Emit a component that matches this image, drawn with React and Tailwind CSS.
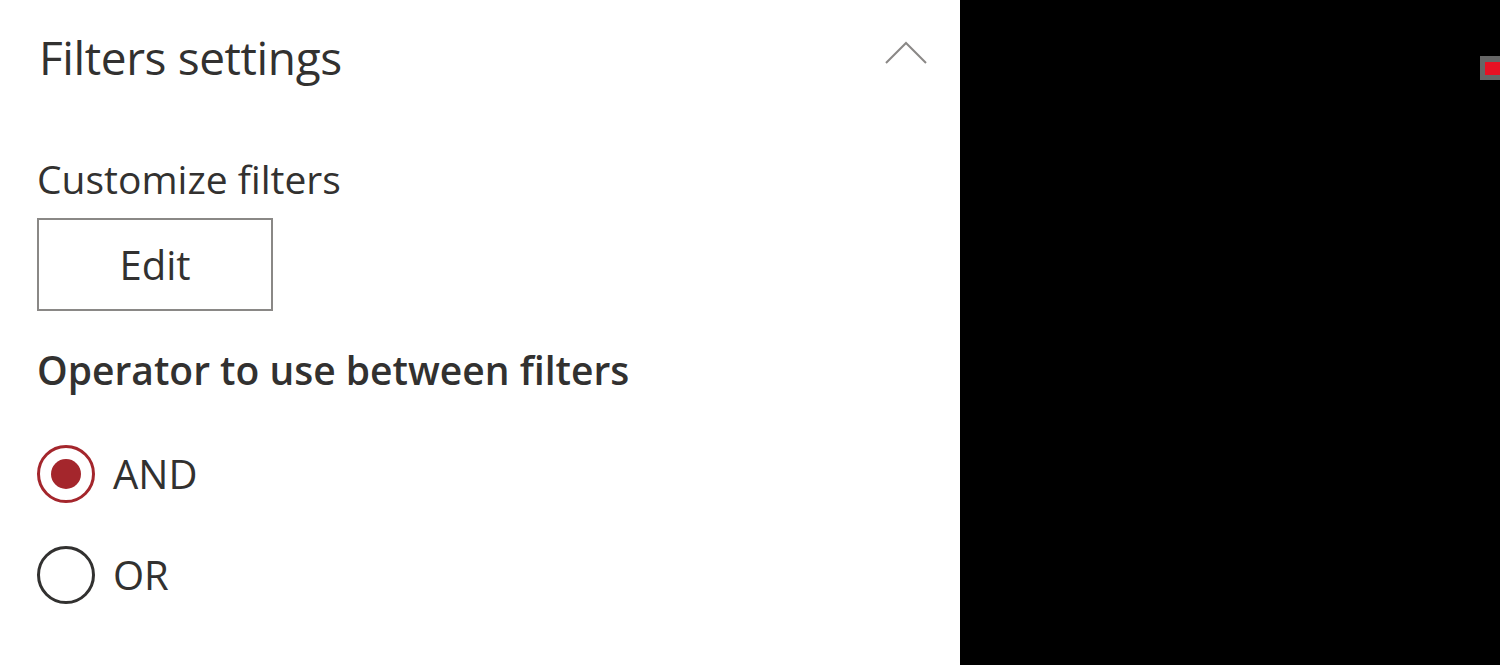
export default function App() {
  return (
    <div className="flex w-[1500px] h-[665px] overflow-hidden bg-black" style={{ fontFamily: '"Open Sans", "Noto Sans", sans-serif' }}>
      <div className="w-[960px] h-full bg-white pl-[37px] pr-[33px] text-[#323130]">
        <div className="flex items-center justify-between h-[108px] pt-[2px]">
          <h2 className="text-[46px] font-normal leading-none tracking-[-0.4px] pl-[2px] pt-[4px]">Filters settings</h2>
          <button className="w-[42px] h-[42px] flex items-center justify-center -mt-[4px]">
            <svg width="42" height="24" viewBox="0 0 42 24" fill="none">
              <path d="M1 22 L21 2 L41 22" stroke="#8a8886" strokeWidth="2" />
            </svg>
          </button>
        </div>
        <div className="text-[39px] leading-[54px] mt-[44px]">Customize filters</div>
        <button className="mt-[12px] w-[236px] h-[93px] border-2 border-[#8a8886] bg-white text-[40px] font-medium">
          Edit
        </button>
        <div className="text-[39px] leading-[54px] font-semibold mt-[32px]">Operator to use between filters</div>
        <div className="flex flex-col gap-[43px] mt-[48px]">
          <label className="flex items-center gap-[18px] h-[58px]">
            <span className="w-[58px] h-[58px] rounded-full border-[3px] border-[#a4262c] flex items-center justify-center">
              <span className="w-[30px] h-[30px] rounded-full bg-[#a4262c]" />
            </span>
            <span className="text-[40px] leading-none">AND</span>
          </label>
          <label className="flex items-center gap-[18px] h-[58px]">
            <span className="w-[58px] h-[58px] rounded-full border-[3px] border-[#323130]" />
            <span className="text-[40px] leading-none">OR</span>
          </label>
        </div>
      </div>
      <div className="flex-1 relative">
        <div className="absolute right-0 top-[56px] w-[20px] h-[24px] bg-[#666] pl-[5px] pt-[6px]">
          <div className="w-[15px] h-[13px] bg-[#e81123]" />
        </div>
      </div>
    </div>
  );
}
